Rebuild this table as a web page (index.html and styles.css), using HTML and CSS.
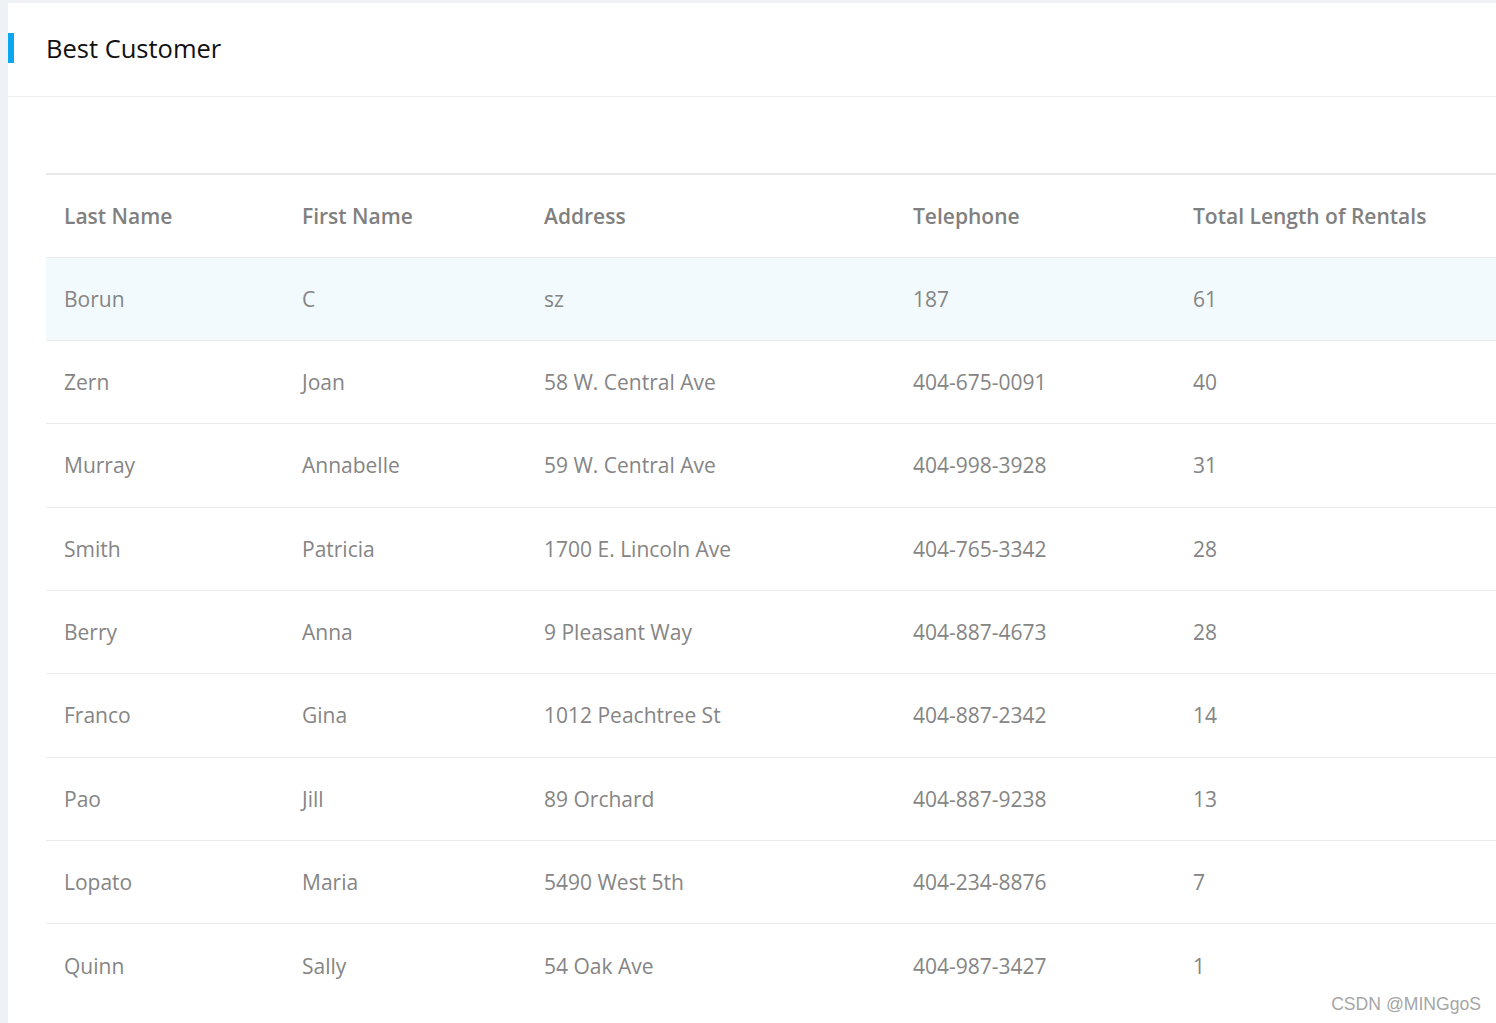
FILE: index.html
```html
<!DOCTYPE html>
<html>
<head>
<meta charset="utf-8">
<link rel="stylesheet" href="styles.css">
</head>
<body>
<div class="page">
  <div class="card">
    <div class="card-header">
      <span class="bar"></span>
      <h1 class="title">Best Customer</h1>
    </div>
    <div class="card-body">
      <table class="grid">
        <colgroup>
          <col class="c1"><col class="c2"><col class="c3"><col class="c4"><col class="c5">
        </colgroup>
        <thead>
          <tr><th>Last Name</th><th>First Name</th><th>Address</th><th>Telephone</th><th>Total Length of Rentals</th></tr>
        </thead>
        <tbody>
          <tr class="hover"><td>Borun</td><td>C</td><td>sz</td><td>187</td><td>61</td></tr>
          <tr><td>Zern</td><td>Joan</td><td>58 W. Central Ave</td><td>404-675-0091</td><td>40</td></tr>
          <tr><td>Murray</td><td>Annabelle</td><td>59 W. Central Ave</td><td>404-998-3928</td><td>31</td></tr>
          <tr><td>Smith</td><td>Patricia</td><td>1700 E. Lincoln Ave</td><td>404-765-3342</td><td>28</td></tr>
          <tr><td>Berry</td><td>Anna</td><td>9 Pleasant Way</td><td>404-887-4673</td><td>28</td></tr>
          <tr><td>Franco</td><td>Gina</td><td>1012 Peachtree St</td><td>404-887-2342</td><td>14</td></tr>
          <tr><td>Pao</td><td>Jill</td><td>89 Orchard</td><td>404-887-9238</td><td>13</td></tr>
          <tr><td>Lopato</td><td>Maria</td><td>5490 West 5th</td><td>404-234-8876</td><td>7</td></tr>
          <tr class="last"><td>Quinn</td><td>Sally</td><td>54 Oak Ave</td><td>404-987-3427</td><td>1</td></tr>
        </tbody>
      </table>
    </div>
  </div>
  <div class="watermark">CSDN @MINGgoS</div>
</div>
</body>
</html>
```
FILE: styles.css
```css
html, body {
  margin: 0;
  padding: 0;
  background: #eef2f6;
  overflow: hidden;
}
.page {
  position: relative;
  width: 1496px;
  height: 1023px;
  padding: 3px 0 0 8px;
  box-sizing: border-box;
  overflow: hidden;
}
.card {
  background: #fff;
  height: 1020px;
  font-family: "Open Sans", "Noto Sans", sans-serif;
}
.card-header {
  display: flex;
  align-items: center;
  height: 94px;
  padding-bottom: 3px;
  border-bottom: 1px solid #eeeeee;
  box-sizing: border-box;
}
.bar {
  width: 6px;
  height: 30px;
  background: #0aa7f0;
  margin-right: 32px;
  flex: none;
}
.title {
  margin: 0;
  font-size: 25.5px;
  font-weight: 400;
  color: #111;
  line-height: 30px;
}
.card-body {
  padding: 76px 0 0 38px;
}
.grid {
  border-collapse: collapse;
  table-layout: fixed;
  width: 1480px;
  border-top: 2px solid #e8e8e8;
}
.c1 { width: 238px; }
.c2 { width: 242px; }
.c3 { width: 369px; }
.c4 { width: 280px; }
.c5 { width: auto; }
.grid th, .grid td {
  text-align: left;
  padding: 0 0 0 18px;
  height: 83.35px;
  box-sizing: border-box;
  font-size: 21px;
  color: #858585;
  white-space: nowrap;
  border-bottom: 1.5px solid #ebebeb;
}
.grid th {
  font-weight: 600;
  color: #808080;
  height: 83px;
}
.grid tr.hover td {
  background: #f2fafd;
}
.grid tr.last td {
  border-bottom: none;
}
.watermark {
  position: absolute;
  right: 15px;
  bottom: 8px;
  font-family: "Liberation Sans", Arial, sans-serif;
  font-size: 17.6px;
  color: #a6a6a6;
  text-shadow: 0 0 1px #fff;
}
```
